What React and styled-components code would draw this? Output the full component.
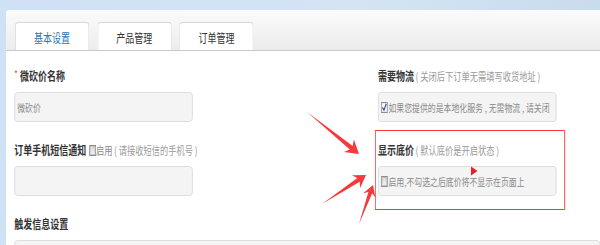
import React from 'react';
import styled, { createGlobalStyle } from 'styled-components';

const GlobalStyle = createGlobalStyle`
  html, body { margin: 0; padding: 0; overflow: hidden; background: #d0e2f5; }
  body { font-family: "Noto Sans CJK SC", "Liberation Sans", sans-serif; }
  #root { width: 600px; height: 245px; }
`;

const Stage = styled.div`
  position: relative;
  width: 600px;
  height: 245px;
  overflow: hidden;
  background: linear-gradient(to right, #cfe1f5 0%, #d4e4f3 60%, #c9dcec 100%);
`;

/* the reference is a horizontally squeezed capture: lay out at 800px and squeeze */
const Canvas = styled.div`
  width: 800px;
  height: 245px;
  box-sizing: border-box;
  padding: 10px 0 0 8px;
  transform: scaleX(0.75);
  transform-origin: 0 0;
`;

const Panel = styled.div`
  height: 100%;
  background: #fff;
  border-radius: 4px 0 0 0;
  overflow: hidden;
`;

const TabBar = styled.div`
  display: flex;
  gap: 10.6px;
  height: 41px;
  box-sizing: border-box;
  padding: 12px 0 0 12px;
  background: linear-gradient(#fbfbfb, #ececec);
  border-bottom: 1px solid #c9c9c9;
`;

const Tab = styled.div`
  width: 99px;
  height: 28px;
  box-sizing: border-box;
  padding-top: 2px;
  display: flex;
  align-items: center;
  justify-content: center;
  background: #fff;
  border: 1px solid #d8d8d8;
  border-bottom: none;
  border-radius: 4px 4px 0 0;
  font-size: 12px;
  color: ${p => (p.$active ? '#3274b4' : '#333')};
`;

const Body = styled.div`
  display: grid;
  grid-template-columns: 485px 1fr;
  row-gap: 20px;
  padding: 17px 0 0 11px;
`;

const Field = styled.div`
  position: relative;
  display: flex;
  flex-direction: column;
  gap: 8px;
  width: ${p => (p.$wide ? 'auto' : '238px')};
  grid-column: ${p => (p.$wide ? '1 / -1' : 'auto')};

  ${p =>
    p.$highlight &&
    `
    &::after {
      content: '';
      position: absolute;
      top: -12px;
      bottom: -14px;
      left: -4px;
      right: -11px;
      border: 1px solid #f33b3b;
      box-shadow: 1px 0 0 #fbb;
      pointer-events: none;
    }
  `}
`;

const Label = styled.div`
  display: flex;
  align-items: center;
  height: 16px;
  font-size: 12px;
  line-height: 16px;
  font-weight: bold;
  color: #333;
  white-space: nowrap;
`;

const Star = styled.span`
  align-self: flex-start;
  margin: -2px 3px 0 0;
  font-size: 10px;
  font-weight: normal;
  color: #ee3b3b;
`;

const Hint = styled.span`
  margin-left: 2px;
  font-size: 11px;
  font-weight: normal;
  color: #9a9a9a;
`;

const Enable = styled.span`
  font-size: 11px;
  font-weight: normal;
  color: #888;
`;

const Box = styled.div`
  height: ${p => (p.$wide ? '40px' : '30px')};
  box-sizing: border-box;
  display: flex;
  align-items: center;
  padding: 0 3px;
  background: #f4f4f4;
  border: 1px solid #d9d9d9;
  border-radius: 4px;
  font-size: 10.5px;
  color: #8a8a8a;
  white-space: nowrap;
`;

const CheckBox = styled.span`
  display: inline-flex;
  align-items: center;
  justify-content: center;
  flex-shrink: 0;
  width: 9px;
  height: 11px;
  box-sizing: border-box;
  margin: ${p => (p.$inLabel ? '0 0 0 4px' : '0 1px 0 0')};
  border: 1px solid #8c8c8c;
  background: ${p => (p.$checked ? '#fff' : 'linear-gradient(#d4d4d4, #f7f7f7)')};
  box-shadow: inset 0 0 0 1px ${p => (p.$checked ? '#e8e8e8' : '#c4c4c4')};
`;

const Overlay = styled.svg`
  position: absolute;
  left: 0;
  top: 0;
  pointer-events: none;
`;

function arrowPoints(tx, ty, hx, hy, headLen, headHalf, shaftHalf) {
  const dx = hx - tx;
  const dy = hy - ty;
  const L = Math.hypot(dx, dy);
  const ux = dx / L;
  const uy = dy / L;
  const nx = -uy;
  const ny = ux;
  const bx = hx - ux * headLen;
  const by = hy - uy * headLen;
  const jx = hx - ux * (headLen - 3);
  const jy = hy - uy * (headLen - 3);
  const pts = [
    [tx, ty],
    [jx + nx * shaftHalf, jy + ny * shaftHalf],
    [bx + nx * headHalf, by + ny * headHalf],
    [hx, hy],
    [bx - nx * headHalf, by - ny * headHalf],
    [jx - nx * shaftHalf, jy - ny * shaftHalf],
  ];
  return pts.map(p => `${p[0].toFixed(1)},${p[1].toFixed(1)}`).join(' ');
}

const arrows = [
  [307, 112, 359, 154, 13, 8, 2.3],
  [322, 204, 366, 175, 12, 7.5, 2.2],
  [359, 224, 373, 185, 11, 6.5, 2],
];

function Check({ checked, inLabel }) {
  return (
    <CheckBox $checked={checked} $inLabel={inLabel}>
      {checked && (
        <svg width="7" height="8" viewBox="0 0 7 8">
          <path d="M1 4.5 L3 7 L6 0.8" fill="none" stroke="#2f4fa8" strokeWidth="1.5" />
        </svg>
      )}
    </CheckBox>
  );
}

export default function App() {
  return (
    <>
      <GlobalStyle />
      <Stage>
        <Canvas>
          <Panel>
            <TabBar>
              <Tab $active>基本设置</Tab>
              <Tab>产品管理</Tab>
              <Tab>订单管理</Tab>
            </TabBar>
            <Body>
              <Field>
                <Label>
                  <Star>*</Star>微砍价名称
                </Label>
                <Box>微砍价</Box>
              </Field>
              <Field>
                <Label>
                  需要物流<Hint>( 关闭后下订单无需填写收货地址 )</Hint>
                </Label>
                <Box>
                  <Check checked />
                  如果您提供的是本地化服务 , 无需物流 , 请关闭
                </Box>
              </Field>
              <Field>
                <Label>
                  订单手机短信通知
                  <Check inLabel />
                  <Enable>启用</Enable>
                  <Hint>( 请接收短信的手机号 )</Hint>
                </Label>
                <Box />
              </Field>
              <Field $highlight>
                <Label>
                  显示底价<Hint>( 默认底价是开启状态 )</Hint>
                </Label>
                <Box>
                  <Check />
                  启用,不勾选之后底价将不显示在页面上
                </Box>
              </Field>
              <Field $wide>
                <Label>触发信息设置</Label>
                <Box $wide />
              </Field>
            </Body>
          </Panel>
        </Canvas>
        <Overlay width="600" height="245" viewBox="0 0 600 245">
          {arrows.map((a, i) => (
            <polygon key={i} points={arrowPoints(...a)} fill="#f43a3a" />
          ))}
          <polygon points="471,166.5 477.5,171 471,175.5" fill="#e8202a" />
        </Overlay>
      </Stage>
    </>
  );
}
